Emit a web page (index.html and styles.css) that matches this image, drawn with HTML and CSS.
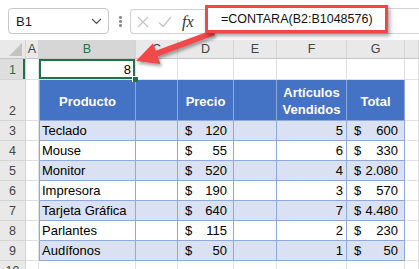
FILE: index.html
```html
<!DOCTYPE html>
<html lang="es">
<head>
<meta charset="utf-8">
<link rel="stylesheet" href="styles.css">
</head>
<body>
<div class="page">
  <div class="toolbar">
    <div class="namebox">
      <span>B1</span>
      <svg class="chev" width="11" height="7" viewBox="0 0 11 7"><path d="M1 1 L5.5 5.5 L10 1" fill="none" stroke="#555" stroke-width="1.2"/></svg>
    </div>
    <div class="dots"><i></i><i></i><i></i></div>
    <div class="fxbox">
      <svg width="12" height="12" viewBox="0 0 12 12"><path d="M1 1 L11 11 M11 1 L1 11" stroke="#c4c4c4" stroke-width="1.2" fill="none"/></svg>
      <svg class="chk" width="14" height="12" viewBox="0 0 14 12"><path d="M1 6.5 L5 10.5 L13 1" stroke="#c4c4c4" stroke-width="1.2" fill="none"/></svg>
      <span class="fx">fx</span>
    </div>
    <div class="formula">
      <div class="highlight">=CONTARA(B2:B1048576)</div>
    </div>
  </div>

  <div class="sheet">
    <div class="h corner"><svg width="13" height="13" viewBox="0 0 13 13"><path d="M13 0 L13 13 L0 13 Z" fill="#c3c3c3"/></svg></div>
    <div class="h">A</div>
    <div class="h selh">B</div>
    <div class="h">C</div>
    <div class="h">D</div>
    <div class="h">E</div>
    <div class="h">F</div>
    <div class="h">G</div>
    <div class="h"></div>

    <div class="r selr">1</div>
    <div class="g"></div>
    <div class="g selc"><span>8</span><i class="handle"></i></div>
    <div class="g"></div><div class="g"></div><div class="g"></div><div class="g"></div><div class="g"></div><div class="g"></div>

    <div class="r">2</div>
    <div class="g"></div>
    <div class="t th tl">Producto</div>
    <div class="t th"></div>
    <div class="t th">Precio</div>
    <div class="t th"></div>
    <div class="t th two">Artículos<br>Vendidos</div>
    <div class="t th">Total</div>
    <div class="g"></div>

    <div class="r">3</div><div class="g"></div>
    <div class="t tl odd txt">Teclado</div><div class="t odd"></div>
    <div class="t odd cur"><span>$</span><span>120</span></div><div class="t odd"></div>
    <div class="t odd num">5</div>
    <div class="t odd cur"><span>$</span><span>600</span></div><div class="g"></div>

    <div class="r">4</div><div class="g"></div>
    <div class="t tl txt">Mouse</div><div class="t"></div>
    <div class="t cur"><span>$</span><span>55</span></div><div class="t"></div>
    <div class="t num">6</div>
    <div class="t cur"><span>$</span><span>330</span></div><div class="g"></div>

    <div class="r">5</div><div class="g"></div>
    <div class="t tl odd txt">Monitor</div><div class="t odd"></div>
    <div class="t odd cur"><span>$</span><span>520</span></div><div class="t odd"></div>
    <div class="t odd num">4</div>
    <div class="t odd cur"><span>$</span><span>2.080</span></div><div class="g"></div>

    <div class="r">6</div><div class="g"></div>
    <div class="t tl txt">Impresora</div><div class="t"></div>
    <div class="t cur"><span>$</span><span>190</span></div><div class="t"></div>
    <div class="t num">3</div>
    <div class="t cur"><span>$</span><span>570</span></div><div class="g"></div>

    <div class="r">7</div><div class="g"></div>
    <div class="t tl odd txt">Tarjeta Gráfica</div><div class="t odd"></div>
    <div class="t odd cur"><span>$</span><span>640</span></div><div class="t odd"></div>
    <div class="t odd num">7</div>
    <div class="t odd cur"><span>$</span><span>4.480</span></div><div class="g"></div>

    <div class="r">8</div><div class="g"></div>
    <div class="t tl txt">Parlantes</div><div class="t"></div>
    <div class="t cur"><span>$</span><span>115</span></div><div class="t"></div>
    <div class="t num">2</div>
    <div class="t cur"><span>$</span><span>230</span></div><div class="g"></div>

    <div class="r">9</div><div class="g"></div>
    <div class="t tl odd txt">Audífonos</div><div class="t odd"></div>
    <div class="t odd cur"><span>$</span><span>50</span></div><div class="t odd"></div>
    <div class="t odd num">1</div>
    <div class="t odd cur"><span>$</span><span>50</span></div><div class="g"></div>

    <div class="r">10</div>
    <div class="g"></div><div class="g"></div><div class="g"></div><div class="g"></div><div class="g"></div><div class="g"></div><div class="g"></div><div class="g"></div>
  </div>

  <svg class="arrow" width="419" height="269" viewBox="0 0 419 269">
    <defs>
      <filter id="sh" x="-20%" y="-20%" width="150%" height="160%">
        <feDropShadow dx="1.5" dy="2.5" stdDeviation="1.5" flood-color="#000" flood-opacity="0.35"/>
      </filter>
    </defs>
    <path d="M136 61 L153 43.3 L155.7 50.8 L213 29.7 L215 35.3 L157.7 56.4 L160.4 64 Z" fill="#f04848" filter="url(#sh)"/>
  </svg>
</div>
</body>
</html>
```

FILE: styles.css
```css
html, body {
  margin: 0;
  padding: 0;
  background: #ffffff;
}
.page {
  position: relative;
  width: 419px;
  height: 269px;
  overflow: hidden;
  font-family: "Liberation Sans", Arial, sans-serif;
  color: #000;
}
.toolbar {
  display: flex;
  align-items: flex-start;
  height: 40px;
  padding-left: 8px;
  box-sizing: border-box;
  background: #ffffff;
}
.namebox {
  margin-top: 8px;
  width: 101px;
  height: 26px;
  box-sizing: border-box;
  border: 1px solid #c8c8c8;
  border-radius: 4px;
  display: flex;
  align-items: center;
  justify-content: space-between;
  padding: 0 6px 0 7px;
  font-size: 13px;
  color: #1a1a1a;
}
.chev { margin-top: 1px; }
.dots {
  margin: 16px 0 0 10px;
  width: 3px;
  display: flex;
  flex-direction: column;
  gap: 1.5px;
}
.dots i {
  display: block;
  width: 2.5px;
  height: 2.5px;
  border-radius: 50%;
  background: #8c8c8c;
}
.fxbox {
  margin: 9px 0 0 8px;
  width: 75px;
  height: 25px;
  box-sizing: border-box;
  border: 1px solid #d0d0d0;
  border-right: none;
  border-radius: 4px 0 0 4px;
  display: flex;
  align-items: center;
  padding-left: 6px;
}
.chk { margin-left: 9px; }
.fx {
  margin-left: 10px;
  font-family: "Liberation Serif", "Times New Roman", serif;
  font-style: italic;
  font-size: 16px;
  color: #333;
}
.formula {
  flex: 1;
  margin-top: 8px;
  height: 26px;
  box-sizing: border-box;
  border-top: 1px solid #d4d4d4;
  border-bottom: 1px solid #d4d4d4;
}
.highlight {
  position: relative;
  z-index: 3;
  margin-top: -4px;
  width: 183px;
  height: 28px;
  box-sizing: border-box;
  border: 3px solid #f04848;
  background: #ffffff;
  box-shadow: 2px 3px 4px rgba(0, 0, 0, 0.35);
  display: flex;
  align-items: center;
  padding-left: 13px;
  font-size: 12.5px;
  color: #111;
}
.sheet {
  display: grid;
  grid-template-columns: 26px 13px 97px 42px 56px 43px 70px 58px 14px;
  grid-template-rows: 19px 21px 41px repeat(7, 20px) 20px;
  font-size: 13px;
}
.sheet > div {
  box-sizing: border-box;
  display: flex;
  align-items: center;
  position: relative;
}
.h {
  background: #e9e9e9;
  border-right: 1px solid #d4d4d4;
  border-bottom: 1px solid #c4c4c4;
  justify-content: center;
  font-size: 12.5px;
  color: #444;
}
.corner {
  justify-content: flex-end !important;
  align-items: flex-end !important;
  padding: 0 3px 2px 0;
}
.corner svg { display: block; }
.selh {
  background: #d6d6d6;
  color: #217346;
}
.r {
  background: #e9e9e9;
  border-right: 1px solid #d4d4d4;
  border-bottom: 1px solid #d4d4d4;
  justify-content: center;
  align-items: flex-end !important;
  padding-bottom: 2px;
  font-size: 12.5px;
  color: #444;
}
.selr {
  background: #dedede;
  color: #217346;
  box-shadow: inset -2px 0 0 #217346;
}
.g {
  background: #fff;
  border-right: 1px solid #e1e1e1;
  border-bottom: 1px solid #e1e1e1;
}
.selc {
  justify-content: flex-end;
  padding-right: 4px;
  box-shadow: inset 0 0 0 2px #217346;
  z-index: 2;
}
.handle {
  position: absolute;
  right: -3px;
  bottom: -3px;
  width: 5px;
  height: 5px;
  background: #217346;
  border: 1px solid #fff;
  border-right: none;
  border-bottom: none;
}
.t {
  background: #fff;
  border-right: 1px solid #8ea9db;
  border-bottom: 1px solid #8ea9db;
}
.tl { border-left: 1px solid #8ea9db; }
.odd { background: #d9e1f2; }
.th {
  background: #4472c4;
  color: #fff;
  font-weight: bold;
  justify-content: center;
  text-align: center;
  padding-top: 2px;
}
.two { line-height: 17px; }
.txt { padding-left: 2px; }
.num { justify-content: flex-end; padding-right: 3px; }
.cur { justify-content: space-between; padding: 0 6px 0 7px; }
.arrow {
  position: absolute;
  left: 0;
  top: 0;
  z-index: 2;
  pointer-events: none;
}
```
